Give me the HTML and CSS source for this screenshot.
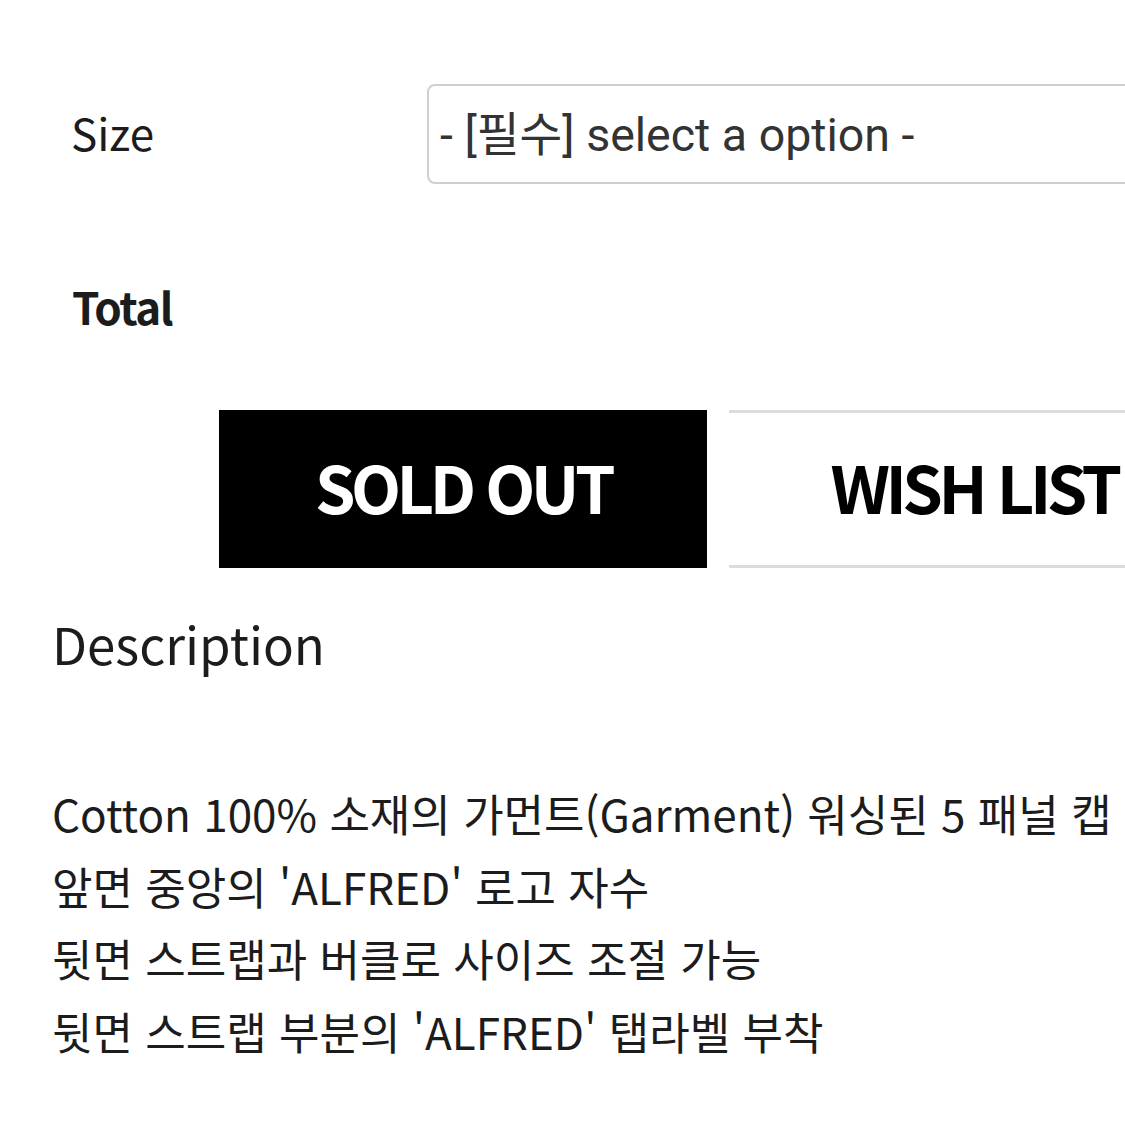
FILE: index.html
```html
<!DOCTYPE html>
<html lang="ko">
<head>
<meta charset="utf-8">
<link rel="stylesheet" href="styles.css">
</head>
<body>
<div class="page">
  <div class="option-row">
    <div class="option-label">Size</div>
    <div class="select">- [필수] select a option -</div>
  </div>
  <div class="total-row">
    <div class="total-label">Total</div>
  </div>
  <div class="actions">
    <div class="btn btn-sold">SOLD OUT</div>
    <div class="btn btn-wish">WISH LIST</div>
  </div>
  <div class="desc">
    <h2 class="desc-title">Description</h2>
    <div class="desc-body">
      <p>Cotton 100% 소재의 가먼트(Garment) 워싱된 5 패널 캡</p>
      <p>앞면 중앙의 'ALFRED' 로고 자수</p>
      <p>뒷면 스트랩과 버클로 사이즈 조절 가능</p>
      <p>뒷면 스트랩 부분의 'ALFRED' 탭라벨 부착</p>
    </div>
  </div>
</div>
</body>
</html>
```

FILE: styles.css
```css
html, body {
  margin: 0;
  padding: 0;
  background: #fff;
}
body {
  width: 1125px;
  height: 1125px;
  overflow: hidden;
  font-family: "Noto Sans CJK KR", "Noto Sans", sans-serif;
  color: #1c1c1c;
}
.page {
  padding-top: 84px;
  overflow: hidden;
}
.option-row {
  display: flex;
  align-items: center;
  height: 100px;
}
.option-label {
  flex: none;
  box-sizing: border-box;
  width: 427px;
  padding-left: 71px;
  font-size: 44px;
  line-height: 1;
  padding-bottom: 4px;
}
.select {
  flex: none;
  width: 760px;
  height: 100px;
  box-sizing: border-box;
  border: 2px solid #cfcfcf;
  border-radius: 8px;
  display: flex;
  align-items: center;
  padding-left: 11px;
  padding-bottom: 8px;
  font-family: Roboto, "Noto Sans CJK KR", sans-serif;
  font-size: 46.5px;
  color: #333;
}
.total-row {
  margin-top: 100px;
  padding-left: 72px;
}
.total-label {
  font-size: 44px;
  font-weight: 700;
  line-height: 1;
  letter-spacing: -1.5px;
}
.actions {
  margin-top: 82px;
  display: flex;
  gap: 22px;
  padding-left: 219px;
}
.btn {
  flex: none;
  width: 488px;
  height: 158px;
  box-sizing: border-box;
  display: flex;
  align-items: center;
  justify-content: center;
  padding-bottom: 6px;
  font-size: 65px;
  font-weight: 700;
  letter-spacing: -4.5px;
}
.btn-sold {
  background: #000;
  color: #fff;
}
.btn-wish {
  background: #fff;
  color: #000;
  border-top: 3px solid #dcdcdc;
  border-bottom: 3px solid #dcdcdc;
  padding-left: 2px;
}
.desc {
  padding-left: 52px;
}
.desc-title {
  margin: 50px 0 0;
  font-size: 51px;
  font-weight: 400;
  line-height: 1;
}
.desc-body {
  margin-top: 108px;
  font-size: 44px;
}
.desc-body p {
  margin: 0;
  line-height: 72.5px;
}
```
